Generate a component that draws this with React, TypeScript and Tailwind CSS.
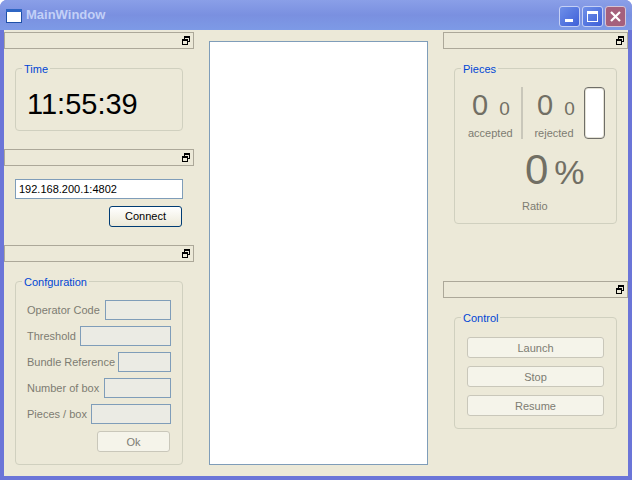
import type { ReactNode } from "react"

const font = "[font-family:'Liberation_Sans',sans-serif]"

function DockBar({ className = "" }: { className?: string }) {
  return (
    <div className={`flex h-[17px] items-center justify-end border border-[#aca899] pr-[3px] ${className}`}>
      <svg width="8" height="9" viewBox="0 0 8 9" fill="none" stroke="#000" shapeRendering="crispEdges">
        <path d="M2.5 3V0.5H7.5V5.5H5.5" />
        <path d="M2 1.5H8" />
        <rect x="0.5" y="3.5" width="5" height="5" />
        <path d="M0 4.5H6" />
      </svg>
    </div>
  )
}

function Group({ title, className, children }: { title: string; className: string; children?: ReactNode }) {
  return (
    <div className={`relative rounded-[4px] border border-[#d0d0bf] ${className}`}>
      <span className="absolute top-[-6px] left-[6px] bg-[#ece9d8] px-[2px] text-[11px] leading-[13px] text-[#0046d5]">{title}</span>
      {children}
    </div>
  )
}

function FieldRow({ label, width }: { label: string; width: string }) {
  return (
    <div className="flex h-[20px] items-center justify-between">
      <span className="text-[11px] whitespace-nowrap text-[#7d7c72]">{label}</span>
      <div className={`h-[20px] border border-[#7f9db9] bg-[#ebebe4] ${width}`} />
    </div>
  )
}

function DisabledButton({ label, className = "" }: { label: string; className?: string }) {
  return (
    <button disabled className={`flex h-[21px] items-center justify-center rounded-[3px] border border-[#c9c7ba] bg-[#f5f4ea] pt-[1px] text-[11px] text-[#7d7c72] ${className}`}>
      {label}
    </button>
  )
}

function Counter({ label, className }: { label: string; className: string }) {
  return (
    <div className={`flex flex-col ${className}`}>
      <div className="flex h-[36px] items-baseline pl-[4px] text-[#716f64]">
        <span className="text-[29px] leading-[36px]">0</span>
        <span className="ml-[11px] text-[19px] leading-[36px]">0</span>
      </div>
      <span className="mt-[4px] text-center text-[11px] leading-[13px] text-[#7d7c72]">{label}</span>
    </div>
  )
}

export default function App() {
  return (
    <div className={`flex h-[480px] w-[632px] flex-col overflow-hidden rounded-t-[7px] bg-[#6b75d8] ${font}`}>
      <div className="flex h-[30px] shrink-0 items-center bg-gradient-to-b from-[#8a9fe8] via-[#7a90e0] to-[#7d9ae6] pr-[6px] pl-[6px]">
        <svg width="16" height="14" viewBox="0 0 16 14" className="mt-[2px] mr-[4px]">
          <rect x="0.5" y="0.5" width="15" height="13" fill="#fff" stroke="#1d4fa8" />
          <rect x="0" y="0" width="16" height="3" fill="#2f66c4" />
        </svg>
        <span className="text-[13px] font-bold text-[#c3d0f7]">MainWindow</span>
        <div className="mt-[3px] ml-auto flex gap-[2px]">
          <div className="flex h-[21px] w-[21px] items-end rounded-[3px] border border-[#c5d0f5] bg-gradient-to-br from-[#6f8fe8] to-[#3f5fd8] pb-[4px] pl-[5px]">
            <div className="h-[3px] w-[8px] bg-white" />
          </div>
          <div className="flex h-[21px] w-[21px] items-center justify-center rounded-[3px] border border-[#c5d0f5] bg-gradient-to-br from-[#6f8fe8] to-[#3f5fd8]">
            <div className="h-[11px] w-[11px] border border-t-[3px] border-white" />
          </div>
          <div className="flex h-[21px] w-[21px] items-center justify-center rounded-[3px] border border-[#d5c5d5] bg-[#a5607c]">
            <svg width="13" height="13" viewBox="0 0 13 13" stroke="#fff" strokeWidth="2.2">
              <path d="M2 2L11 11M11 2L2 11" />
            </svg>
          </div>
        </div>
      </div>

      <div className="mx-[4px] mb-[4px] flex flex-1 bg-[#ece9d8] pt-[2px]">
        <div className="w-[190px] shrink-0">
          <DockBar />
          <Group title="Time" className="mt-[19px] ml-[11px] h-[63px] w-[168px]">
            <div className="pt-[17px] pl-[11px] text-[29px] leading-[36px] text-black">11:55:39</div>
          </Group>

          <DockBar className="mt-[18px]" />
          <div className="mt-[13px] ml-[11px] flex h-[20px] w-[168px] items-center border border-[#7f9db9] bg-white pl-[3px] text-[11px] text-black">192.168.200.1:4802</div>
          <button className="mt-[7px] ml-[105px] flex h-[21px] w-[73px] items-center justify-center rounded-[3px] border border-[#003c74] bg-gradient-to-b from-white to-[#ece9d8] text-[11px] text-black">Connect</button>

          <DockBar className="mt-[18px]" />
          <Group title="Confguration" className="mt-[19px] ml-[11px] h-[184px] w-[168px]">
            <div className="flex flex-col gap-[6px] pt-[18px] pr-[11px] pl-[11px]">
              <FieldRow label="Operator Code" width="w-[66px]" />
              <FieldRow label="Threshold" width="w-[91px]" />
              <FieldRow label="Bundle Reference" width="w-[53px]" />
              <FieldRow label="Number of box" width="w-[67px]" />
              <FieldRow label="Pieces / box" width="w-[80px]" />
            </div>
            <DisabledButton label="Ok" className="mt-[7px] ml-[81px] w-[73px]" />
          </Group>
        </div>

        <div className="mt-[9px] mb-[11px] ml-[15px] w-[219px] shrink-0 border border-[#7f9db9] bg-white" />

        <div className="ml-[15px] w-[185px] shrink-0">
          <DockBar />
          <Group title="Pieces" className="mt-[19px] ml-[11px] h-[156px] w-[163px]">
            <div className="flex pt-[18px] pl-[13px]">
              <Counter label="accepted" className="w-[44px]" />
              <div className="ml-[9px] h-[52px] w-[2px] bg-[#c9c7ba]" />
              <Counter label="rejected" className="ml-[10px] w-[42px]" />
              <div className="ml-[9px] h-[52px] w-[21px] rounded-[4px] border border-[#6f6e68] bg-white shadow-[inset_0_0_0_1px_#e4e2d6]" />
            </div>
            <div className="mt-[10px] flex h-[40px] items-baseline pl-[70px] text-[#716f64]">
              <span className="text-[42px] leading-[40px]">0</span>
              <span className="ml-[6px] text-[34px] leading-[40px]">%</span>
            </div>
            <div className="mt-[10px] pl-[67px] text-[11px] leading-[13px] text-[#7d7c72]">Ratio</div>
          </Group>

          <DockBar className="mt-[57px]" />
          <Group title="Control" className="mt-[19px] ml-[11px] h-[112px] w-[163px]">
            <div className="flex flex-col gap-[8px] px-[12px] pt-[19px]">
              <DisabledButton label="Launch" />
              <DisabledButton label="Stop" />
              <DisabledButton label="Resume" />
            </div>
          </Group>
        </div>
      </div>
    </div>
  )
}
